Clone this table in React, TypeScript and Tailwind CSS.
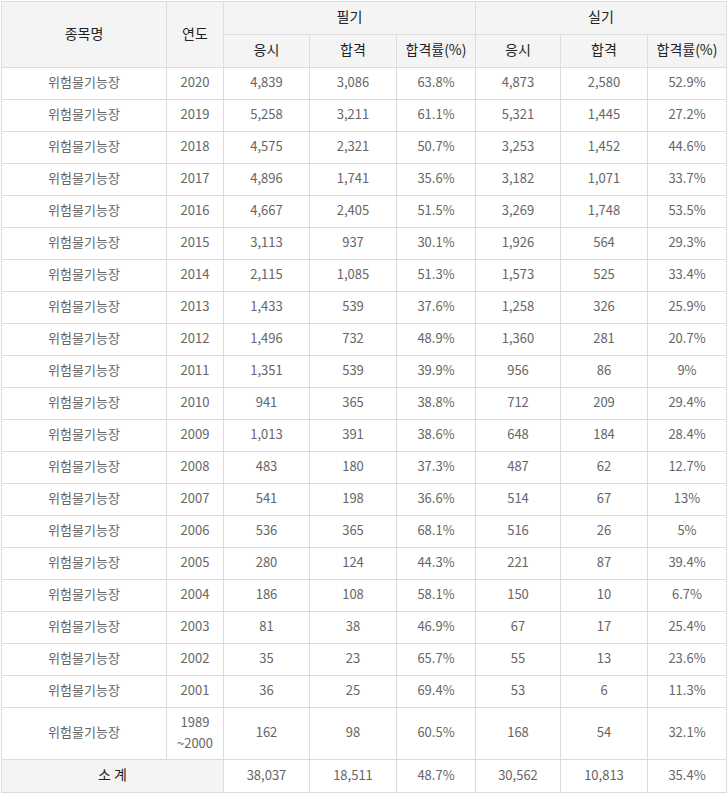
const rows: [string, string, string, string, string, string, string][] = [
  ['2020', '4,839', '3,086', '63.8%', '4,873', '2,580', '52.9%'],
  ['2019', '5,258', '3,211', '61.1%', '5,321', '1,445', '27.2%'],
  ['2018', '4,575', '2,321', '50.7%', '3,253', '1,452', '44.6%'],
  ['2017', '4,896', '1,741', '35.6%', '3,182', '1,071', '33.7%'],
  ['2016', '4,667', '2,405', '51.5%', '3,269', '1,748', '53.5%'],
  ['2015', '3,113', '937', '30.1%', '1,926', '564', '29.3%'],
  ['2014', '2,115', '1,085', '51.3%', '1,573', '525', '33.4%'],
  ['2013', '1,433', '539', '37.6%', '1,258', '326', '25.9%'],
  ['2012', '1,496', '732', '48.9%', '1,360', '281', '20.7%'],
  ['2011', '1,351', '539', '39.9%', '956', '86', '9%'],
  ['2010', '941', '365', '38.8%', '712', '209', '29.4%'],
  ['2009', '1,013', '391', '38.6%', '648', '184', '28.4%'],
  ['2008', '483', '180', '37.3%', '487', '62', '12.7%'],
  ['2007', '541', '198', '36.6%', '514', '67', '13%'],
  ['2006', '536', '365', '68.1%', '516', '26', '5%'],
  ['2005', '280', '124', '44.3%', '221', '87', '39.4%'],
  ['2004', '186', '108', '58.1%', '150', '10', '6.7%'],
  ['2003', '81', '38', '46.9%', '67', '17', '25.4%'],
  ['2002', '35', '23', '65.7%', '55', '13', '23.6%'],
  ['2001', '36', '25', '69.4%', '53', '6', '11.3%'],
]

const th = 'border border-[#dcdcdc] bg-[#f4f4f4] text-[14px] font-normal text-[#222] text-center p-0 pb-[3px]'
const td = 'border border-[#dcdcdc] text-[13px] text-[#666] text-center p-0 pb-[3px]'

export default function App() {
  return (
    <div className="w-[727px] h-[794px] bg-white pl-px pt-px" style={{ fontFamily: '"Noto Sans CJK KR", "Noto Sans", sans-serif' }}>
      <table className="w-[725px] border-collapse table-fixed">
        <colgroup>
          <col className="w-[165px]" />
          <col className="w-[57px]" />
          <col className="w-[86px]" />
          <col className="w-[87px]" />
          <col className="w-[79px]" />
          <col className="w-[85px]" />
          <col className="w-[87px]" />
          <col className="w-[79px]" />
        </colgroup>
        <thead>
          <tr className="h-[33px]">
            <th rowSpan={2} className={th}>종목명</th>
            <th rowSpan={2} className={th}>연도</th>
            <th colSpan={3} className={th}>필기</th>
            <th colSpan={3} className={th}>실기</th>
          </tr>
          <tr className="h-[33px]">
            <th className={th}>응시</th>
            <th className={th}>합격</th>
            <th className={th}>합격률(%)</th>
            <th className={th}>응시</th>
            <th className={th}>합격</th>
            <th className={th}>합격률(%)</th>
          </tr>
        </thead>
        <tbody>
          {rows.map((r) => (
            <tr key={r[0]} className="h-[32px]">
              <td className={td}>위험물기능장</td>
              {r.map((c, i) => (
                <td key={i} className={td}>{c}</td>
              ))}
            </tr>
          ))}
          <tr className="h-[52px]">
            <td className={td}>위험물기능장</td>
            <td className={`${td} leading-[21px]`}>1989<br />~2000</td>
            <td className={td}>162</td>
            <td className={td}>98</td>
            <td className={td}>60.5%</td>
            <td className={td}>168</td>
            <td className={td}>54</td>
            <td className={td}>32.1%</td>
          </tr>
          <tr className="h-[33px]">
            <td colSpan={2} className={`${th} font-bold`}>소 계</td>
            <td className={td}>38,037</td>
            <td className={td}>18,511</td>
            <td className={td}>48.7%</td>
            <td className={td}>30,562</td>
            <td className={td}>10,813</td>
            <td className={td}>35.4%</td>
          </tr>
        </tbody>
      </table>
    </div>
  )
}
